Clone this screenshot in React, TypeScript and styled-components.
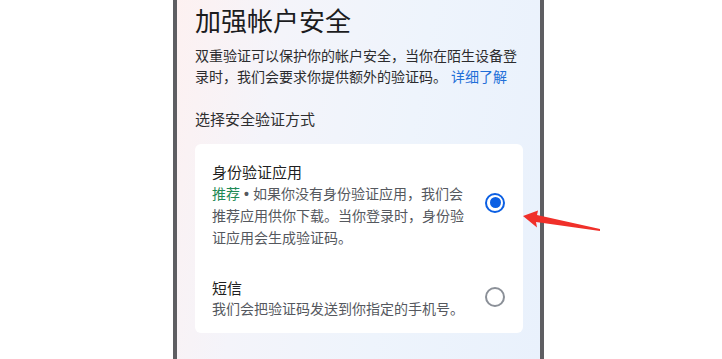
import React from 'react';
import styled, { createGlobalStyle } from 'styled-components';

const GlobalStyle = createGlobalStyle`
  html, body {
    margin: 0;
    padding: 0;
    background: #ffffff;
  }
  body {
    font-family: "Noto Sans CJK SC", "Noto Sans", sans-serif;
  }
`;

const Page = styled.div`
  position: relative;
  width: 722px;
  height: 359px;
  overflow: hidden;
  background: #ffffff;
  display: flex;
`;

const Phone = styled.div`
  margin-left: 173px;
  width: 328px;
  height: 359px;
  border-left: 4px solid #5e5e62;
  border-right: 4px solid #5e5e62;
  background: linear-gradient(100deg, #fdf1f1 0%, #f4f4fa 26%, #eef4fc 60%, #e9f1fc 100%);
  padding: 4px 17px 0 18px;
  display: flex;
  flex-direction: column;
`;

const Title = styled.h1`
  margin: 0;
  font-size: 26px;
  line-height: 32px;
  font-weight: 400;
  color: #1c1c1e;
`;

const Intro = styled.p`
  margin: 8.5px 0 0;
  font-size: 14px;
  line-height: 21px;
  color: #2c2c2e;
`;

const Link = styled.span`
  margin-left: 4px;
  color: #1f6fd8;
`;

const SectionLabel = styled.div`
  margin-top: 21px;
  font-size: 15px;
  line-height: 21px;
  color: #2e2e30;
`;

const Card = styled.div`
  margin-top: 15.5px;
  background: #ffffff;
  border-radius: 6px;
  padding: 17px 0 13.75px;
  display: flex;
  flex-direction: column;
  gap: 28.5px;
`;

const Option = styled.div`
  display: flex;
  align-items: center;
  padding: 0 18px 0 17px;
`;

const OptionText = styled.div`
  width: 260px;
  flex: none;
`;

const OptionTitle = styled.div`
  font-size: 15px;
  line-height: 21.5px;
  color: #1f1f21;
`;

const OptionDesc = styled.div`
  font-size: 14px;
  line-height: 21.5px;
  color: #55585e;
`;

const Tag = styled.span`
  color: #1f8a55;
`;

const Dot = styled.span`
  margin: 0 4px;
  font-family: "Liberation Sans", sans-serif;
  font-weight: 700;
  color: #55585e;
`;

const Radio = styled.span<{ $checked?: boolean; $shift?: number }>`
  margin-left: auto;
  width: 20px;
  height: 20px;
  border-radius: 50%;
  box-sizing: border-box;
  border: 2.5px solid ${(p) => (p.$checked ? '#0b5fe3' : '#8b9098')};
  display: flex;
  align-items: center;
  justify-content: center;
  transform: translateY(${(p) => p.$shift ?? 0}px);
  &::after {
    content: '';
    width: 11px;
    height: 11px;
    border-radius: 50%;
    background: ${(p) => (p.$checked ? '#0b5fe3' : 'transparent')};
  }
`;

const Arrow = styled.svg`
  position: absolute;
  left: 518px;
  top: 205px;
`;

export default function App() {
  return (
    <>
      <GlobalStyle />
      <Page>
        <Phone>
          <Title>加强帐户安全</Title>
          <Intro>
            双重验证可以保护你的帐户安全，当你在陌生设备登录时，我们会要求你提供额外的验证码。<Link>详细了解</Link>
          </Intro>
          <SectionLabel>选择安全验证方式</SectionLabel>
          <Card>
            <Option>
              <OptionText>
                <OptionTitle>身份验证应用</OptionTitle>
                <OptionDesc>
                  <Tag>推荐</Tag>
                  <Dot>•</Dot>如果你没有身份验证应用，我们会推荐应用供你下载。当你登录时，身份验证应用会生成验证码。
                </OptionDesc>
              </OptionText>
              <Radio $checked $shift={-2} />
            </Option>
            <Option>
              <OptionText>
                <OptionTitle>短信</OptionTitle>
                <OptionDesc>我们会把验证码发送到你指定的手机号。</OptionDesc>
              </OptionText>
              <Radio $shift={-1} />
            </Option>
          </Card>
        </Phone>
        <Arrow width="86" height="30" viewBox="0 0 86 30">
          <polygon points="5,11 20,5.5 19,10 82,24 82,26 18,17 19,22.5" fill="#f0302a" />
        </Arrow>
      </Page>
    </>
  );
}
